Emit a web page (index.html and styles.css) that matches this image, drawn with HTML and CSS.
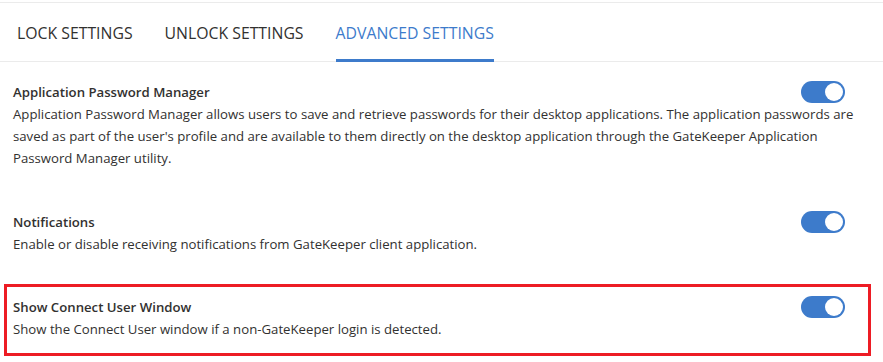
FILE: index.html
```html
<!DOCTYPE html>
<html lang="en">
<head>
    <meta charset="UTF-8">
    <meta name="viewport" content="width=device-width, initial-scale=1.0">
    <title>GateKeeper Settings</title>
    <link rel="stylesheet" href="styles.css">
</head>
<body>
    <div class="page">
        <nav class="tabs">
            <button class="tab">Lock Settings</button>
            <button class="tab">Unlock Settings</button>
            <button class="tab active">Advanced Settings</button>
        </nav>

        <div class="settings">
            <div class="setting">
                <div class="setting-head">
                    <div class="setting-title">Application Password Manager</div>
                    <span class="toggle on"></span>
                </div>
                <p class="setting-desc">Application Password Manager allows users to save and retrieve passwords for their desktop applications. The application passwords are saved as part of the user's profile and are available to them directly on the desktop application through the GateKeeper Application Password Manager utility.</p>
            </div>

            <div class="setting">
                <div class="setting-head">
                    <div class="setting-title">Notifications</div>
                    <span class="toggle on"></span>
                </div>
                <p class="setting-desc">Enable or disable receiving notifications from GateKeeper client application.</p>
            </div>

            <div class="setting highlight">
                <div class="setting-head">
                    <div class="setting-title">Show Connect User Window</div>
                    <span class="toggle on"></span>
                </div>
                <p class="setting-desc">Show the Connect User window if a non-GateKeeper login is detected.</p>
            </div>
        </div>
    </div>
</body>
</html>
```

FILE: styles.css
```css
:root {
    --text-color: #323130;
    --accent-color: #3d7bcb;
    --line-color: #ebebeb;
    --mark-color: #ed1c24;
}
body {
    font-family: 'Open Sans', 'Liberation Sans', sans-serif;
    background-color: #ffffff;
    color: var(--text-color);
    margin: 0;
    padding: 0;
}
.page {
    margin-top: 2px;
    border-top: 1px solid var(--line-color);
}
.tabs {
    display: flex;
    gap: 32px;
    padding-left: 17px;
    height: 58px;
    border-bottom: 1px solid var(--line-color);
}
.tab {
    background: none;
    border: none;
    border-bottom: 3px solid transparent;
    margin-bottom: -1px;
    padding: 3px 0 0;
    font-family: inherit;
    font-size: 15.8px;
    color: var(--text-color);
    text-transform: uppercase;
    cursor: pointer;
}
.tab.active {
    color: var(--accent-color);
    border-bottom-color: var(--accent-color);
}
.settings {
    padding-top: 19px;
}
.setting {
    padding: 0 13px;
    margin-bottom: 42px;
}
.setting:has(+ .highlight) {
    margin-bottom: 29px;
}
.setting-head {
    display: flex;
    align-items: center;
    justify-content: space-between;
}
.setting-title {
    font-size: 13.2px;
    font-weight: 600;
    line-height: 22px;
}
.setting-desc {
    margin: 0;
    font-size: 13.2px;
    line-height: 22px;
}
.toggle {
    position: relative;
    display: inline-block;
    width: 44px;
    height: 22px;
    margin-right: 25px;
    border-radius: 11px;
    background-color: #c8c8c8;
}
.toggle::after {
    content: "";
    position: absolute;
    top: 2px;
    left: 2px;
    width: 18px;
    height: 18px;
    border-radius: 50%;
    background-color: #ffffff;
}
.toggle.on {
    background-color: var(--accent-color);
}
.toggle.on::after {
    left: 24px;
}
.setting.highlight {
    margin: 0 12px 0 4px;
    padding: 9px 0 13px 6px;
    border: 3px solid var(--mark-color);
}
.setting.highlight .toggle {
    margin-right: 23px;
}
```
